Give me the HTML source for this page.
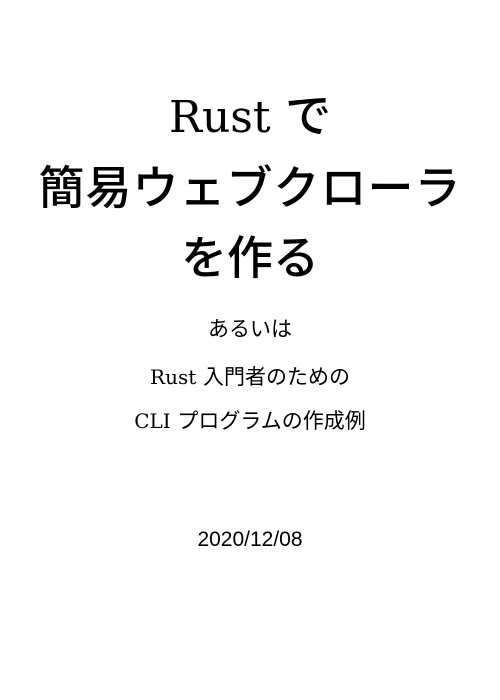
<!DOCTYPE html>
<html><head><meta charset="utf-8"><style>
html,body{margin:0;padding:0;background:#fff;}
body{width:500px;height:700px;position:relative;overflow:hidden;color:#000;}
.t{position:absolute;left:0;width:500px;text-align:center;white-space:nowrap;}
.big{font-family:"DejaVu Serif","Noto Sans CJK JP",sans-serif;font-size:46px;font-weight:500;line-height:1;}
.sm{font-family:"DejaVu Serif","Noto Sans CJK JP",sans-serif;font-size:21px;line-height:1;}
.jp{font-family:"Noto Sans CJK JP",sans-serif;}
.lat{font-size:44px;}
.lats{font-size:20px;}
</style></head><body>
<div class="t big" style="top:90px"><span class="lat">Rust</span> <span class="jp">で</span></div>
<div class="t big jp" style="top:162px;letter-spacing:1px">簡易ウェブクローラ</div>
<div class="t big jp" style="top:232px">を作る</div>
<div class="t sm jp" style="top:318px">あるいは</div>
<div class="t sm" style="top:366px"><span class="lats">Rust</span> <span class="jp">入門者のための</span></div>
<div class="t sm" style="top:410px"><span class="lats">CLI</span> <span class="jp">プログラムの作成例</span></div>
<div class="t sm" style="top:529px;font-family:'Liberation Sans',sans-serif">2020/12/08</div>
</body></html>
